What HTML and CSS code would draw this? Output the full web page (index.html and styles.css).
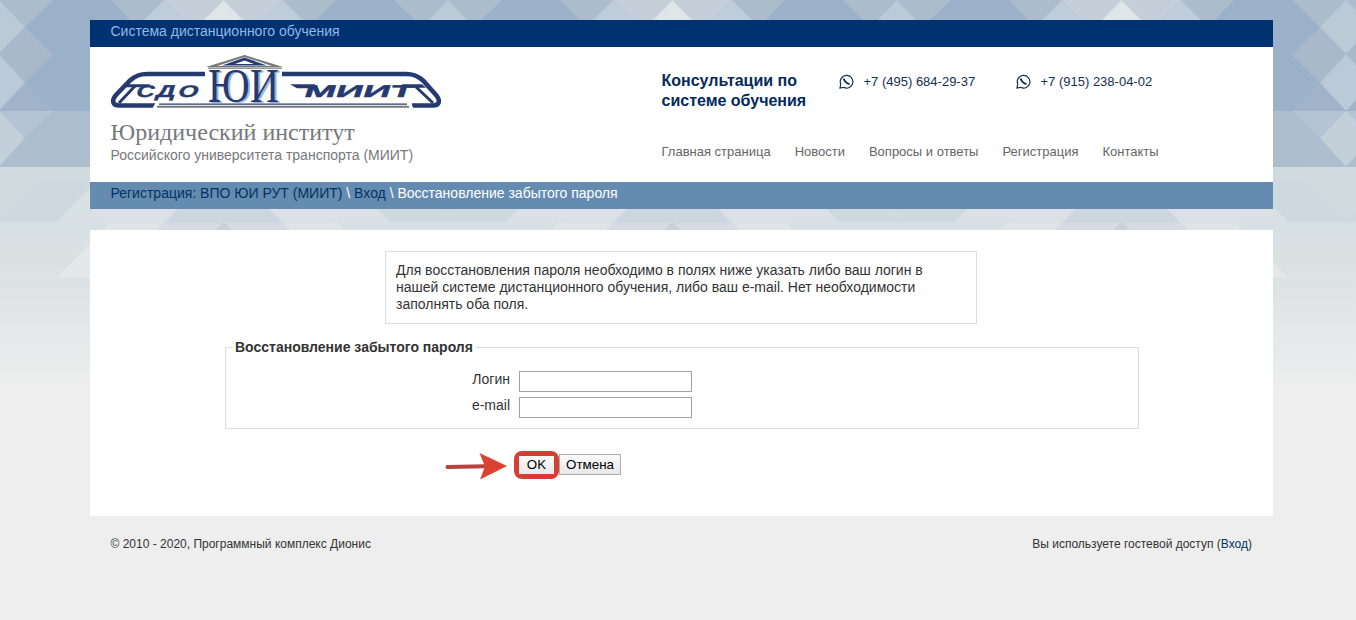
FILE: index.html
```
<!DOCTYPE html>
<html lang="ru">
<head>
  <meta charset="UTF-8">
  <title>Восстановление забытого пароля</title>
  <link rel="stylesheet" href="styles.css">
</head>
<body>
  <svg class="backdrop" width="1356" height="390" aria-hidden="true">
    <defs>
      <linearGradient id="fade" x1="0" y1="0" x2="0" y2="1">
        <stop offset="0" stop-color="#dce1e3"/>
        <stop offset="0.4" stop-color="#e4e7e8"/>
        <stop offset="1" stop-color="#eeeeee"/>
      </linearGradient>
      <linearGradient id="low" x1="0" y1="0" x2="0" y2="1">
        <stop offset="0" stop-color="#d6e0e4"/>
        <stop offset="1" stop-color="#dde2e3"/>
      </linearGradient>
      <g id="half">
        <path fill="#9bb0c9" d="M0 0h225v111H0z"/>
        <path fill="#acbdce" d="M0 111h225v56H0z"/>
        <path fill="#d0dbe0" d="M0 167h225v56H0z"/>
        <path fill="url(#low)" d="M0 222h225v57H0z"/>
        <!-- верхний ряд -->
        <path fill="#abbdcb" d="M0 0h54L26 27z"/>
        <path fill="#bccad7" d="M0 0l26 27L0 54z"/>
        <path fill="#a9b9cb" d="M26 27l28 28H0z"/>
        <path fill="#abbdcb" d="M112 0h53l-27 27z"/>
        <path fill="#bfcdda" d="M165 0l27 27h-54z"/>
        <path fill="#c5cfd9" d="M165 0h60v27h-33z"/>
        <path fill="#e0e5ea" d="M225 0v27h-27z"/>
        <!-- второй ряд -->
        <path fill="#a8bac9" d="M0 54l54 1-28 28z"/>
        <path fill="#bbcad8" d="M0 54l26 29L0 111z"/>
        <path fill="#a1b3c9" d="M26 83l28 28H0z"/>
        <!-- третий ряд -->
        <path fill="#b5c4d5" d="M0 111h54l-28 27z"/>
        <path fill="#c3cfd9" d="M0 111l26 27L0 167z"/>
        <path fill="#afbecf" d="M26 138l28 29H0z"/>
        <!-- нижние ряды -->
        <path fill="#cdd8df" d="M0 222l42-42h56l-42 42z"/>
        <path fill="#dae1e4" d="M112 167v56H57z"/>
        <path fill="#dbe0e4" d="M112 167h113v56H112z"/>
        <path fill="#e5e8e9" d="M112 222v57H57z"/>
        <path fill="#ccd6de" d="M225 167v56h-60l28-28z"/>
        <path fill="#d6dce1" d="M112 223h113v10H112z"/>
        <path fill="#dfe3e6" d="M104 231l9-8h52l-10 10z"/>
        <path fill="#c8d0d9" d="M225 222v9h-10z"/>
      </g>
      <pattern id="tile" x="-1" y="0" width="449" height="390" patternUnits="userSpaceOnUse">
        <use href="#half"/>
        <use href="#half" transform="translate(449 0) scale(-1 1)"/>
      </pattern>
    </defs>
    <rect width="1356" height="278" fill="url(#tile)"/>
    <rect y="278" width="1356" height="112" fill="url(#fade)"/>
  </svg>

  <div class="page">
    <header>
      <div class="topbar">Система дистанционного обучения</div>
      <div class="head">
        <div class="brand">
          <svg class="logo" width="332" height="58" viewBox="0 0 332 58">
            <g fill="none" stroke="#253a70" stroke-width="4.600">
              <path d="M95 22H37C29 22 25 24 20 28.500L6 43C1 49 3 53.500 9 53.500H46"/>
              <path d="M172 22H296C304 22 308 24 313 28.500L326 43C331 49 329 53.500 323 53.500H302"/>
              <path stroke-width="3" d="M25 34L9 51M305 34L323 51"/>
            </g>
            <path fill="#253a70" d="M18 32.200h22l-2 3H15zM292 32.200h20l4 3.600h-24z"/>
            <path fill="#fff" d="M46 50h3.500l-4 7H42zM296.500 50h3.500l4 7h-3.500z"/>
            <path fill="none" stroke="#253a70" stroke-width="1.200" d="M49 52.200H297"/>
            <path fill="none" stroke="#77787b" stroke-width="2" d="M47 54.700H299"/>
            <path fill="#77787b" fill-rule="evenodd" d="M134.500 3L173 15H96zM134.500 5L107 14h55z"/>
            <path fill="#253a70" fill-rule="evenodd" d="M134.500 5.500L157 13.500h-45zM134.500 8.500L125 12h19z"/>
            <path fill="#77787b" d="M98 15.500h74v1.300H98z"/>
            <text class="logo-small" transform="translate(25 44.500) skewX(-18)" textLength="18" lengthAdjust="spacingAndGlyphs">С</text>
            <text class="logo-small" transform="translate(45 44.500) skewX(-18)" textLength="19" lengthAdjust="spacingAndGlyphs">Д</text>
            <text class="logo-small" transform="translate(67 44.500) skewX(-18)" textLength="20" lengthAdjust="spacingAndGlyphs">О</text>
            <text class="logo-back" x="100" y="50.500" textLength="71" lengthAdjust="spacingAndGlyphs">ЮИ</text>
            <text class="logo-big" x="98" y="50" textLength="71" lengthAdjust="spacingAndGlyphs">ЮИ</text>
            <path fill="#253a70" d="M180 32.200h25v4h-18z"/>
            <text class="logo-small" transform="translate(193 44.500) skewX(-18)" textLength="109" lengthAdjust="spacingAndGlyphs">МИИТ</text>
          </svg>
          <div class="institute">Юридический институт</div>
          <div class="university">Российского университета транспорта (МИИТ)</div>
        </div>
        <div class="info">
          <div class="contacts">
            <div class="consult">Консультации по<br>системе обучения</div>
            <div class="phone">
              <svg width="15" height="15" viewBox="0 0 15 15"><path class="ring" d="M1 14l.7-4A6.300 6.300 0 1 1 4.600 13.300z"/><path class="tube" d="M4.700 4.500C5 6.500 7.500 9.600 10.500 10.200"/></svg>
              <span>+7 (495) 684-29-37</span>
            </div>
            <div class="phone">
              <svg width="15" height="15" viewBox="0 0 15 15"><path class="ring" d="M1 14l.7-4A6.300 6.300 0 1 1 4.600 13.300z"/><path class="tube" d="M4.700 4.500C5 6.500 7.500 9.600 10.500 10.200"/></svg>
              <span>+7 (915) 238-04-02</span>
            </div>
          </div>
          <nav>
            <a href="#">Главная страница</a>
            <a href="#">Новости</a>
            <a href="#">Вопросы и ответы</a>
            <a href="#">Регистрация</a>
            <a href="#">Контакты</a>
          </nav>
        </div>
      </div>
      <div class="crumbs"><a href="#">Регистрация: ВПО ЮИ РУТ (МИИТ)</a> \ <a href="#">Вход</a> \ Восстановление забытого пароля</div>
    </header>

    <main>
      <div class="note">Для восстановления пароля необходимо в полях ниже указать либо ваш логин в нашей системе дистанционного обучения, либо ваш e-mail. Нет необходимости заполнять оба поля.</div>
      <form onsubmit="return false">
        <fieldset>
          <legend>Восстановление забытого пароля</legend>
          <div class="row"><label for="login">Логин</label><input type="text" id="login"></div>
          <div class="row"><label for="email">e-mail</label><input type="text" id="email"></div>
        </fieldset>
        <div class="buttons">
          <svg class="arrow" width="62" height="28" viewBox="0 0 62 28">
            <path fill="none" stroke="#b8433c" stroke-width="4" stroke-linecap="round" d="M2.500 15L40 14.300"/>
            <path fill="#dd4132" d="M34.500 1L62 14 35 27.500l5-13z"/>
          </svg>
          <div class="marked"><button type="submit">OK</button></div>
          <button type="reset">Отмена</button>
        </div>
      </form>
    </main>

    <footer>
      <span>© 2010 - 2020, Программный комплекс Дионис</span>
      <span>Вы используете гостевой доступ (<a href="#">Вход</a>)</span>
    </footer>
  </div>
</body>
</html>
```
FILE: styles.css
```
* {
  box-sizing: border-box;
}
body {
  margin: 0;
  min-height: 620px;
  background: #eeeeee;
  color: #333;
  font: 14px/17px "Liberation Sans", Arial, sans-serif;
  overflow: hidden;
}
a {
  color: #003366;
  text-decoration: none;
}
.backdrop {
  position: absolute;
  top: 0;
  left: 0;
  z-index: -1;
}
.page {
  width: 1183px;
  margin-left: 90px;
  padding-top: 20px;
}
.topbar {
  height: 27px;
  padding: 3px 20.5px;
  background: #003170;
  color: #8fb8e8;
}
.head {
  display: flex;
  height: 135px;
  padding: 5px 20px 0 20.5px;
  background: #fff;
}
.brand {
  width: 551px;
}
.logo {
  display: block;
  margin-left: -1px;
  overflow: visible;
}
.logo-small {
  font: bold 17px "Liberation Sans", Arial, sans-serif;
  fill: #253a70;
  stroke: #253a70;
  stroke-width: 0.4;
}
.logo-big,
.logo-back {
  font: 49px "Liberation Serif", "Times New Roman", serif;
  fill: #253a70;
}
.logo-back {
  fill: #9db6d6;
}
.institute {
  margin-top: 9px;
  color: #77787b;
  font: 24px/27px "Liberation Serif", "Times New Roman", serif;
}
.university {
  margin-top: 1px;
  color: #77787b;
}
.contacts {
  display: flex;
  height: 92px;
  padding-top: 19px;
}
.consult {
  width: 177px;
  color: #022b5c;
  font-size: 16px;
  font-weight: bold;
  line-height: 20px;
}
.phone {
  display: flex;
  width: 177px;
  gap: 10px;
  padding-top: 3px;
  color: #15304f;
  font-size: 13px;
  line-height: 15px;
}
.ring {
  fill: none;
  stroke: #15304f;
  stroke-width: 1.2;
}
.tube {
  fill: none;
  stroke: #15304f;
  stroke-width: 1.8;
}
nav {
  display: flex;
  gap: 24px;
  margin-right: -20px;
  font-size: 13px;
  line-height: 16px;
}
nav a {
  color: #666;
}
.crumbs {
  height: 27px;
  padding: 3px 20.5px;
  background: #668bb0;
  color: #fff;
}
main {
  height: 286px;
  margin-top: 21px;
  padding: 21px 134px 0 135px;
  background: #fff;
}
.note {
  width: 592px;
  height: 73px;
  margin: 0 auto 0 160px;
  padding: 10px;
  border: 1px solid #ddd;
}
fieldset {
  height: 90px;
  margin: 15px 0 0;
  padding: 15px 0 0;
  border: 1px solid #ddd;
}
legend {
  margin-left: 7px;
  padding: 0 2px;
  font-weight: bold;
}
.row {
  display: flex;
  height: 21px;
  margin-bottom: 5px;
}
.row label {
  width: 284px;
  margin-right: 9px;
  text-align: right;
}
.row input {
  width: 173px;
  height: 21px;
  border: 1px solid #a0a0a0;
}
.buttons {
  display: flex;
  align-items: center;
  margin-top: 20px;
  padding-left: 220px;
}
.arrow {
  margin-top: 3px;
}
.marked {
  display: flex;
  width: 45px;
  height: 28px;
  margin-left: 7px;
  border: 5px solid #d24034;
  border-radius: 8px;
}
button {
  width: 62px;
  height: 21px;
  padding: 0;
  border: 1px solid #adadad;
  background: linear-gradient(#fbfbfb, #e8e8e8);
  color: #000;
  font: 13.330px "Liberation Sans", Arial, sans-serif;
}
.marked button {
  width: 35px;
  height: 18px;
  border: 0;
}
footer {
  display: flex;
  justify-content: space-between;
  padding: 20px 21px 0 20.5px;
  font-size: 12px;
}
```
